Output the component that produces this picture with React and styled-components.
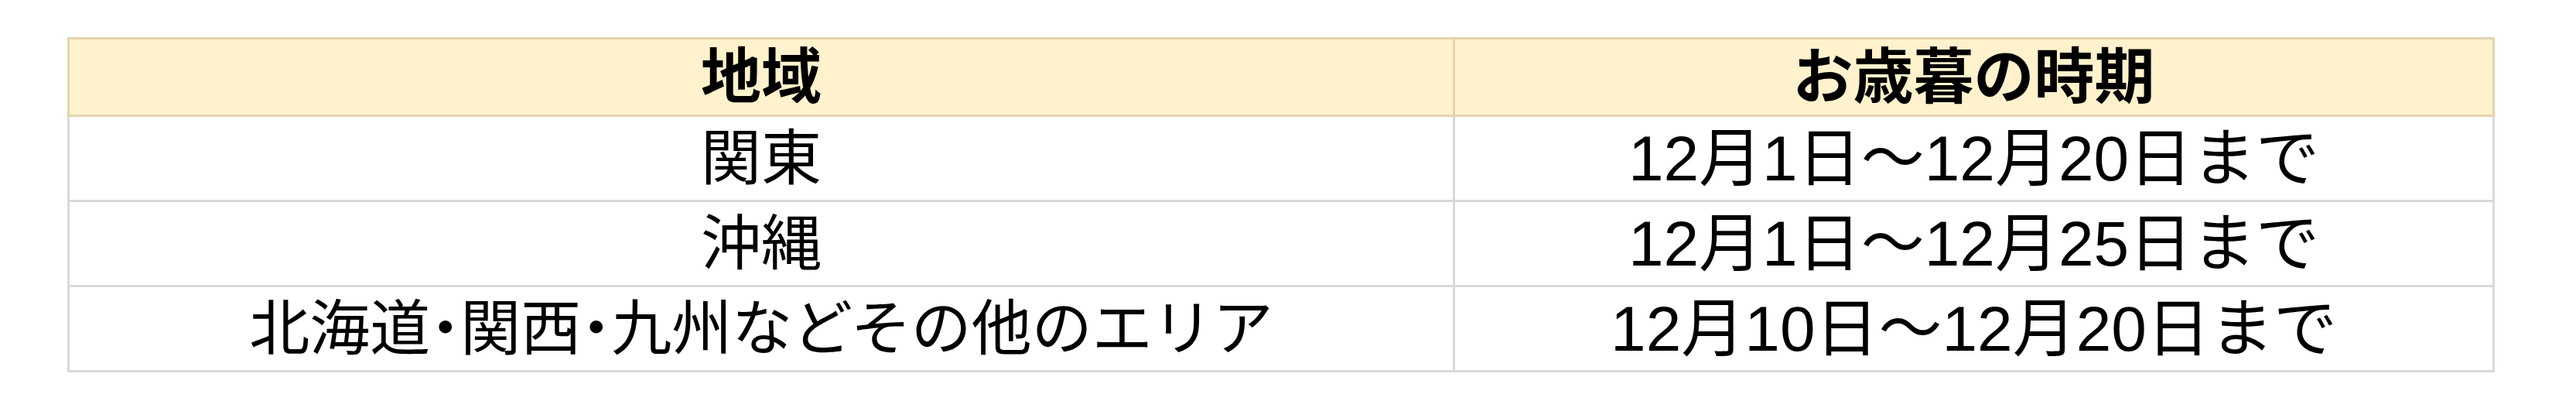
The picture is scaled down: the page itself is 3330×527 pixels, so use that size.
import React from 'react'
import styled, { createGlobalStyle } from 'styled-components'

const GlobalStyle = createGlobalStyle`
  html, body {
    margin: 0;
    padding: 0;
    background: #ffffff;
  }
`

const Page = styled.div`
  padding: 48px 0 0 87px;
  font-family: "Liberation Sans", Arial, "Noto Sans CJK JP", sans-serif;
  color: #000000;
`

const Table = styled.table`
  width: 3138px;
  border-collapse: collapse;
  table-layout: fixed;
`

const HeadCell = styled.th`
  height: 97px;
  padding: 0;
  background: #fff2cc;
  border: 3px solid #e2d4ae;
  font-size: 78px;
  font-weight: 700;
  text-align: center;
  vertical-align: middle;
  line-height: 1;
`

const Cell = styled.td`
  height: 107px;
  padding: 0;
  border: 3px solid #d9d9d9;
  font-size: ${props => props.$size || 78}px;
  font-weight: 400;
  text-align: center;
  vertical-align: middle;
  line-height: 1;
`

const Dot = styled.span`
  font-feature-settings: "halt";
`

const rows = [
  { area: '関東', period: '12月1日～12月20日まで' },
  { area: '沖縄', period: '12月1日～12月25日まで' },
  {
    area: (
      <>
        北海道<Dot>・</Dot>関西<Dot>・</Dot>九州などその他のエリア
      </>
    ),
    period: '12月10日～12月20日まで'
  }
]

export default function App() {
  return (
    <Page>
      <GlobalStyle />
      <Table>
        <colgroup>
          <col style={{ width: '1791px' }} />
          <col />
        </colgroup>
        <thead>
          <tr>
            <HeadCell>地域</HeadCell>
            <HeadCell>お歳暮の時期</HeadCell>
          </tr>
        </thead>
        <tbody>
          {rows.map((row, i) => (
            <tr key={i}>
              <Cell $size={78}>{row.area}</Cell>
              <Cell $size={82}>{row.period}</Cell>
            </tr>
          ))}
        </tbody>
      </Table>
    </Page>
  )
}
